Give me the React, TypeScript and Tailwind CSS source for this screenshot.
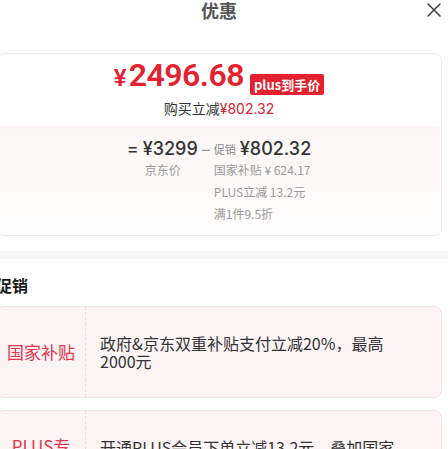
const cjk = '"Noto Sans CJK SC", "Noto Sans", sans-serif'
const num = 'Inter, "Noto Sans CJK SC", sans-serif'
const bigNum = 'Roboto, Inter, "Noto Sans CJK SC", sans-serif'

function CloseIcon() {
  return (
    <svg width="14" height="14" viewBox="0 0 14 14" fill="none">
      <path d="M1 1L13 13M13 1L1 13" stroke="#333" strokeWidth="1.4" strokeLinecap="round" />
    </svg>
  )
}

function PromoCard({ label, text }: { label: React.ReactNode; text: string }) {
  return (
    <div className="flex min-h-[92px] rounded-[8px] border border-[#f2e3e5] bg-[#fdf4f5]">
      <div className="flex w-[89px] shrink-0 items-center justify-center border-r border-dashed border-[#ecd9dc] text-center text-[17px] leading-[20px] text-[#e2364a]">
        {label}
      </div>
      <div className="flex items-center pl-[14px] pr-[32px] text-[16px] leading-[18px] text-[#333]">
        {text}
      </div>
    </div>
  )
}

export default function App() {
  return (
    <div className="-ml-[10px] w-[458px] bg-white" style={{ fontFamily: cjk }}>
      {/* Header */}
      <div className="grid h-[20px] grid-cols-[1fr_auto_1fr] items-center">
        <div />
        <h1 className="text-[18px] font-bold leading-[20px] text-[#555]">优惠</h1>
        <div className="flex justify-end pr-[7px]">
          <CloseIcon />
        </div>
      </div>

      {/* Price card */}
      <div className="mx-[6px] mt-[33px] overflow-hidden rounded-[8px] border border-[#ebebeb]">
        <div className="flex flex-col items-center pt-[10px] pb-[7px]">
          <div className="flex h-[34px] items-end">
            <span className="font-semibold leading-[34px] text-[#e3212f]" style={{ fontFamily: bigNum }}>
              <span className="text-[24px]">¥</span>
              <span className="ml-[2px] text-[32px] tracking-[-0.5px]">2496.68</span>
            </span>
            <span className="mb-[3px] ml-[6px] flex h-[21px] items-center rounded-[2px] bg-[#e3212f] px-[4px] text-[13px] font-bold text-white">
              plus到手价
            </span>
          </div>
          <div className="text-[14px] leading-[20px] text-[#333]">
            购买立减<span className="text-[#e3212f]" style={{ fontFamily: num }}>¥802.32</span>
          </div>
        </div>
        <div className="flex justify-center bg-gradient-to-b from-[#fcf7f6] to-[#fefcfc] pt-[13px] pb-[10px]">
          <div className="flex items-start">
            <span className="mr-[4px] text-[18px] leading-[20px] text-[#333]" style={{ fontFamily: num }}>=</span>
            <div className="flex flex-col">
              <span className="text-[18px] font-medium leading-[20px] text-[#333]" style={{ fontFamily: num }}>¥3299</span>
              <span className="pl-[2px] text-[12px] leading-[22px] text-[#999]">京东价</span>
            </div>
            <span className="mx-[4px] text-[16px] leading-[20px] text-[#999]" style={{ fontFamily: num }}>–</span>
            <div className="flex flex-col">
              <div className="flex items-center leading-[20px]">
                <span className="mr-[4px] text-[11px] text-[#888]">促销</span>
                <span className="text-[18px] font-medium text-[#333]" style={{ fontFamily: num }}>¥802.32</span>
              </div>
              <span className="text-[12px] leading-[22px] text-[#999]">国家补贴 ¥ 624.17</span>
              <span className="text-[12px] leading-[22px] text-[#999]">PLUS立减 13.2元</span>
              <span className="text-[12px] leading-[22px] text-[#999]">满1件9.5折</span>
            </div>
          </div>
        </div>
      </div>

      <div className="mt-[15px] h-[8px] bg-[#f6f7f9]" />

      {/* Promotions */}
      <div className="px-[6px] pt-[16px]">
        <h2 className="text-[16px] font-bold leading-[20px] text-[#1a1a1a]">促销</h2>
        <div className="mt-[11px] flex flex-col gap-[12px]">
          <PromoCard label="国家补贴" text="政府&京东双重补贴支付立减20%，最高2000元" />
          <PromoCard
            label={<>PLUS专<br />享</>}
            text="开通PLUS会员下单立减13.2元，叠加国家补贴更优惠，每单限享一次"
          />
        </div>
      </div>
    </div>
  )
}
